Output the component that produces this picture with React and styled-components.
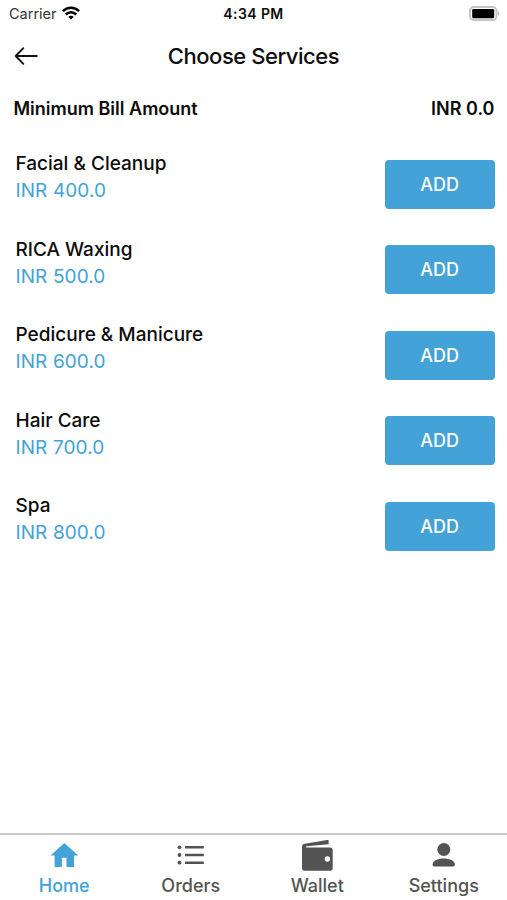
import styled, { createGlobalStyle } from "styled-components";
import { useState } from "react";

const services = [
    { name: "Facial & Cleanup", price: "INR 400.0" },
    { name: "RICA Waxing", price: "INR 500.0" },
    { name: "Pedicure & Manicure", price: "INR 600.0" },
    { name: "Hair Care", price: "INR 700.0" },
    { name: "Spa", price: "INR 800.0" },
];

const WifiIcon = () => (
    <svg width="18" height="14" viewBox="0 0 18 14" fill="none" stroke="#000" strokeWidth="2.5">
        <path d="M.9 5.1C5.4 .5 12.600 .5 17.100 5.100" />
        <path d="M3.800 8.500c2.900-2.900 7.500-2.900 10.400 0" />
        <path d="M6.300 10.800c1.500-1.300 3.900-1.300 5.400 0L9 13.600z" fill="#000" stroke="none" />
    </svg>
);

const BatteryIcon = () => (
    <svg width="31" height="15" viewBox="0 0 31 15">
        <rect x="1" y="1" width="26.4" height="13" rx="3.6" fill="#fff" stroke="#c4c4c4" strokeWidth="1.9" />
        <rect x="3.2" y="3" width="22" height="9.2" rx="1.2" fill="#000" />
        <path d="M28.8 5.3c2 .6 2 3.9 0 4.5z" fill="#b4b4b4" />
    </svg>
);

const BackIcon = () => (
    <svg width="24" height="20" viewBox="0 0 24 20" fill="none" stroke="#111" strokeWidth="1.9" strokeLinecap="round" strokeLinejoin="round">
        <path d="M9.300 2.200L1.700 10l7.600 7.800M2 10h20.800" />
    </svg>
);

const HomeIcon = () => (
    <svg width="32" height="32" viewBox="0 0 32 32" fill="currentColor">
        <path d="M16.300 4L2.500 16.500h4.100v11.600h7.300v-9.400h4.600v9.400h7.600V16.500h4.200z" />
    </svg>
);

const OrdersIcon = () => (
    <svg width="32" height="32" viewBox="0 0 32 32" fill="currentColor">
        <circle cx="4.5" cy="8.3" r="1.9" />
        <circle cx="4.5" cy="16" r="1.9" />
        <circle cx="4.5" cy="23.7" r="1.9" />
        <path d="M10 7.100h18.800v2.500H10zM10 14.800h18.800v2.500H10zM10 22.500h18.800V25H10z" />
    </svg>
);

const WalletIcon = () => (
    <svg width="32" height="32" viewBox="0 0 32 32" fill="currentColor">
        <path d="M27.700 2v3.200L5.500 7.300c-1 .1-1 1.300.2 1.300h23.600c1.500 0 2.400 1 2.400 2.400v18.300c0 1.600-.9 2.400-2.400 2.400H3.400C1.900 31.700 1 30.900 1 29.300V7.800C1 5.800 2 5 3.800 4.700L26 1c1-.1 1.700.2 1.700 1z" />
        <circle cx="26.400" cy="20" r="2.700" fill="#fff" />
    </svg>
);

const SettingsIcon = () => (
    <svg width="32" height="32" viewBox="0 0 32 32" fill="currentColor">
        <circle cx="15.800" cy="10.500" r="6.500" />
        <path d="M4.600 25.700c0-4.200 5-6.300 11.100-6.300s11.200 2.100 11.200 6.300c0 1.100-.6 1.700-1.700 1.700h-19c-1.100 0-1.600-.6-1.600-1.700z" />
    </svg>
);

const tabs = [
    { id: "Home", icon: HomeIcon },
    { id: "Orders", icon: OrdersIcon },
    { id: "Wallet", icon: WalletIcon },
    { id: "Settings", icon: SettingsIcon },
];

const App = () => {
    const [activeTab, setActiveTab] = useState("Home");

    return <Screen>
        <GlobalStyle />
        <StatusBar>
            <Carrier>Carrier <WifiIcon /></Carrier>
            <Time>4:34 PM</Time>
            <Battery><BatteryIcon /></Battery>
        </StatusBar>
        <Header>
            <BackButton aria-label="Back"><BackIcon /></BackButton>
            <Title>Choose Services</Title>
        </Header>
        <BillRow>
            <span>Minimum Bill Amount</span>
            <span>INR 0.0</span>
        </BillRow>
        <ServiceList>
            {services.map((service) => (
                <ServiceRow key={service.name}>
                    <div>
                        <ServiceName>{service.name}</ServiceName>
                        <Price>{service.price}</Price>
                    </div>
                    <AddButton>ADD</AddButton>
                </ServiceRow>
            ))}
        </ServiceList>
        <TabBar>
            {tabs.map(({ id, icon: Icon }) => (
                <Tab key={id} $active={id === activeTab} onClick={() => setActiveTab(id)}>
                    <Icon />
                    <TabLabel>{id}</TabLabel>
                </Tab>
            ))}
        </TabBar>
    </Screen>
};

const GlobalStyle = createGlobalStyle`
* { box-sizing: border-box; }
body {
  margin: 0;
  background: #fff;
}
button {
  font-family: inherit;
  border: none;
  padding: 0;
  background: none;
}
svg { display: block; flex: none; }
`;

const Screen = styled.div`
display: flex;
flex-direction: column;
width: 100%;
height: 100vh;
overflow: hidden;
color: #0c0c0c;
background: #fff;
font-family: Inter, "Liberation Sans", sans-serif;
`;

const StatusBar = styled.div`
display: grid;
grid-template-columns: 1fr auto 1fr;
align-items: center;
height: 28px;
padding: 0 7px 2px 9px;
`;

const Carrier = styled.div`
display: flex;
align-items: center;
gap: 5px;
font-size: 14.5px;
color: #333;
`;

const Time = styled.div`
margin-right: 2px;
font-size: 14px;
font-weight: 600;
letter-spacing: 0.4px;
`;

const Battery = styled.div`
justify-self: end;
`;

const Header = styled.header`
display: grid;
grid-template-columns: 40px 1fr 40px;
align-items: center;
height: 56px;
padding: 0 14px;
`;

const BackButton = styled.button`
display: flex;
`;

const Title = styled.h1`
margin: 0;
text-align: center;
font-size: 22px;
font-weight: 550;
line-height: 28px;
letter-spacing: -0.45px;
`;

const BillRow = styled.div`
display: flex;
align-items: center;
justify-content: space-between;
height: 48px;
padding: 0 12.5px 0 13.5px;
font-size: 18px;
font-weight: 600;
`;

const ServiceList = styled.div`
flex: 1;
padding-top: 9.6px;
`;

const ServiceRow = styled.div`
display: flex;
align-items: center;
justify-content: space-between;
height: 85.5px;
padding: 0 12.5px 0 15.5px;
`;

const ServiceName = styled.div`
margin-top: -14px;
font-size: 19px;
font-weight: 500;
line-height: 27px;
`;

const Price = styled.div`
font-size: 19px;
line-height: 27px;
letter-spacing: 0.1px;
color: #43a2d7;
`;

const AddButton = styled.button`
width: 110px;
height: 49px;
border-radius: 4px;
background: #43a2d7;
color: #fff;
font-size: 18px;
font-weight: 550;
`;

const TabBar = styled.nav`
display: grid;
grid-template-columns: repeat(4, 1fr);
height: 67px;
padding-left: 1px;
border-top: 2px solid #c9c9c9;
`;

const Tab = styled.button`
display: flex;
flex-direction: column;
align-items: center;
padding-top: 4px;
color: ${props => props.$active ? "#43a2d7" : "#535353"};
`;

const TabLabel = styled.span`
margin-top: 3px;
font-size: 18px;
font-weight: 500;
line-height: 24px;
`;

export default App;
